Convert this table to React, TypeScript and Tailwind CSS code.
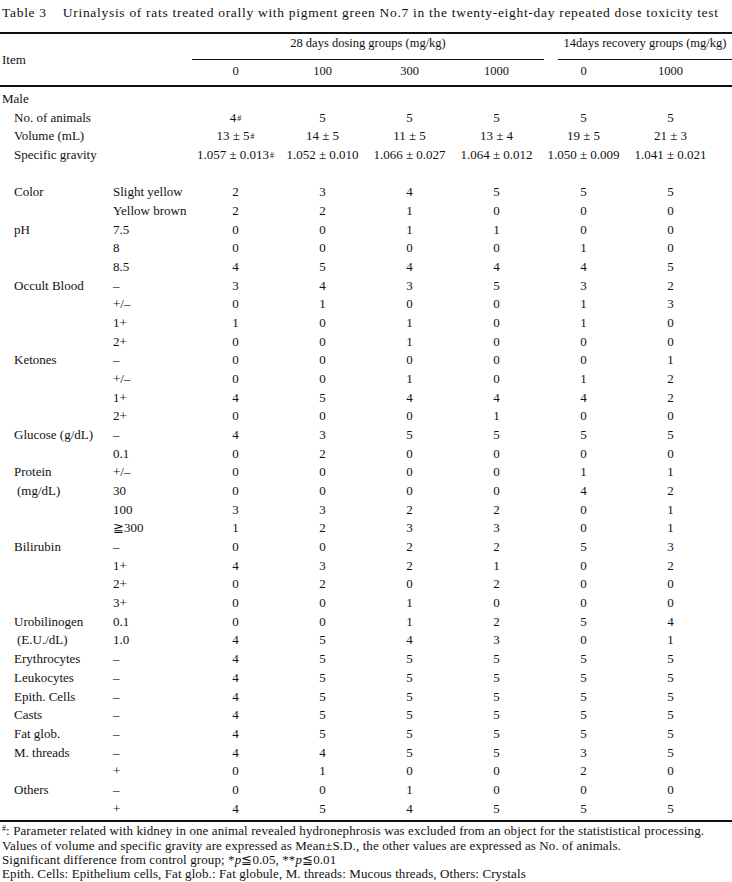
import React from "react";

type Row = {
  label?: React.ReactNode;
  span?: boolean;
  indent?: number;
  sub?: string;
  vals?: React.ReactNode[];
  blank?: boolean;
};

const Sup = () => <sup className="text-[8px] relative -top-[1px] ml-[1px]">#</sup>;

const rows: Row[] = [
  { label: "Male", span: true, indent: 2 },
  { label: "No. of animals", span: true, vals: [<>4<Sup /></>, "5", "5", "5", "5", "5"] },
  { label: "Volume (mL)", span: true, vals: [<>13 ± 5<Sup /></>, "14 ± 5", "11 ± 5", "13 ± 4", "19 ± 5", "21 ± 3"] },
  {
    label: "Specific gravity",
    span: true,
    vals: [<>1.057 ± 0.013<Sup /></>, "1.052 ± 0.010", "1.066 ± 0.027", "1.064 ± 0.012", "1.050 ± 0.009", "1.041 ± 0.021"],
  },
  { blank: true },
  { label: "Color", sub: "Slight yellow", vals: ["2", "3", "4", "5", "5", "5"] },
  { sub: "Yellow brown", vals: ["2", "2", "1", "0", "0", "0"] },
  { label: "pH", sub: "7.5", vals: ["0", "0", "1", "1", "0", "0"] },
  { sub: "8", vals: ["0", "0", "0", "0", "1", "0"] },
  { sub: "8.5", vals: ["4", "5", "4", "4", "4", "5"] },
  { label: "Occult Blood", sub: "–", vals: ["3", "4", "3", "5", "3", "2"] },
  { sub: "+/–", vals: ["0", "1", "0", "0", "1", "3"] },
  { sub: "1+", vals: ["1", "0", "1", "0", "1", "0"] },
  { sub: "2+", vals: ["0", "0", "1", "0", "0", "0"] },
  { label: "Ketones", sub: "–", vals: ["0", "0", "0", "0", "0", "1"] },
  { sub: "+/–", vals: ["0", "0", "1", "0", "1", "2"] },
  { sub: "1+", vals: ["4", "5", "4", "4", "4", "2"] },
  { sub: "2+", vals: ["0", "0", "0", "1", "0", "0"] },
  { label: "Glucose (g/dL)", sub: "–", vals: ["4", "3", "5", "5", "5", "5"] },
  { sub: "0.1", vals: ["0", "2", "0", "0", "0", "0"] },
  { label: "Protein", sub: "+/–", vals: ["0", "0", "0", "0", "1", "1"] },
  { label: "(mg/dL)", indent: 17, sub: "30", vals: ["0", "0", "0", "0", "4", "2"] },
  { sub: "100", vals: ["3", "3", "2", "2", "0", "1"] },
  { sub: "≧300", vals: ["1", "2", "3", "3", "0", "1"] },
  { label: "Bilirubin", sub: "–", vals: ["0", "0", "2", "2", "5", "3"] },
  { sub: "1+", vals: ["4", "3", "2", "1", "0", "2"] },
  { sub: "2+", vals: ["0", "2", "0", "2", "0", "0"] },
  { sub: "3+", vals: ["0", "0", "1", "0", "0", "0"] },
  { label: "Urobilinogen", sub: "0.1", vals: ["0", "0", "1", "2", "5", "4"] },
  { label: "(E.U./dL)", indent: 17, sub: "1.0", vals: ["4", "5", "4", "3", "0", "1"] },
  { label: "Erythrocytes", sub: "–", vals: ["4", "5", "5", "5", "5", "5"] },
  { label: "Leukocytes", sub: "–", vals: ["4", "5", "5", "5", "5", "5"] },
  { label: "Epith. Cells", sub: "–", vals: ["4", "5", "5", "5", "5", "5"] },
  { label: "Casts", sub: "–", vals: ["4", "5", "5", "5", "5", "5"] },
  { label: "Fat glob.", sub: "–", vals: ["4", "5", "5", "5", "5", "5"] },
  { label: "M. threads", sub: "–", vals: ["4", "4", "5", "5", "3", "5"] },
  { sub: "+", vals: ["0", "1", "0", "0", "2", "0"] },
  { label: "Others", sub: "–", vals: ["0", "0", "1", "0", "0", "0"] },
  { sub: "+", vals: ["4", "5", "4", "5", "5", "5"] },
];

export default function App() {
  return (
    <div
      className="w-[732px] h-[882px] bg-white text-[#111] overflow-hidden"
      style={{ fontFamily: '"Liberation Serif", "DejaVu Serif", serif' }}
    >
      {/* Title */}
      <div className="h-[26px] flex items-center pl-[2px] text-[13.5px] tracking-[0.7px] whitespace-nowrap">
        <span>Table 3</span>
        <span className="ml-[16px]">
          Urinalysis of rats treated orally with pigment green No.7 in the twenty-eight-day repeated dose toxicity test
        </span>
      </div>
      <div className="mt-[6px] h-[2px] bg-[#111]" />

      {/* Header */}
      <div className="flex h-[51px] text-[12.5px]">
        <div className="w-[192px] flex items-center pl-[2px] pt-[1px] text-[13px]">Item</div>
        <div className="flex-1 flex flex-col">
          <div className="flex h-[26px]">
            <div className="w-[352px] border-b border-[#111] text-center leading-[18px]">
              28 days dosing groups (mg/kg)
            </div>
            <div className="w-[14px]" />
            <div className="flex-1 border-b border-[#111] text-center leading-[18px]">
              14days recovery groups (mg/kg)
            </div>
          </div>
          <div className="grid grid-cols-[repeat(6,87px)] h-[25px] leading-[22px] text-center">
            <div>0</div>
            <div>100</div>
            <div>300</div>
            <div>1000</div>
            <div>0</div>
            <div>1000</div>
          </div>
        </div>
      </div>
      <div className="h-[2px] bg-[#111]" />

      {/* Body */}
      <div className="mt-[3px] text-[13px]">
        {rows.map((r, i) => (
          <div key={i} className="grid grid-cols-[113px_79px_repeat(6,87px)] h-[18.68px] leading-[18.68px] whitespace-nowrap">
            {r.blank ? (
              <div className="col-span-8" />
            ) : (
              <>
                {r.span ? (
                  <div
                    className="col-span-2"
                    style={{ paddingLeft: (r.indent ?? 14) + "px" }}
                  >
                    {r.label}
                  </div>
                ) : (
                  <>
                    <div style={{ paddingLeft: (r.indent ?? 14) + "px" }}>{r.label}</div>
                    <div>{r.sub}</div>
                  </>
                )}
                {(r.vals ?? ["", "", "", "", "", ""]).map((v, j) => (
                  <div key={j} className="text-center">
                    {v}
                  </div>
                ))}
              </>
            )}
          </div>
        ))}
      </div>
      <div className="mt-[2px] h-[2px] bg-[#111]" />

      {/* Footnotes */}
      <div className="mt-[2px] pl-[2px] text-[13px] tracking-[0.1px] leading-[14.4px] whitespace-nowrap">
        <div>
          <sup className="text-[8px]">#</sup>: Parameter related with kidney in one animal revealed hydronephrosis was excluded from an object for the statististical processing.
        </div>
        <div>
          Values of volume and specific gravity are expressed as Mean±S.D., the other values are expressed as No. of animals.
        </div>
        <div>
          Significant difference from control group; *<i>p</i>≦0.05, **<i>p</i>≦0.01
        </div>
        <div>
          Epith. Cells: Epithelium cells, Fat glob.: Fat globule, M. threads: Mucous threads, Others: Crystals
        </div>
      </div>
    </div>
  );
}
